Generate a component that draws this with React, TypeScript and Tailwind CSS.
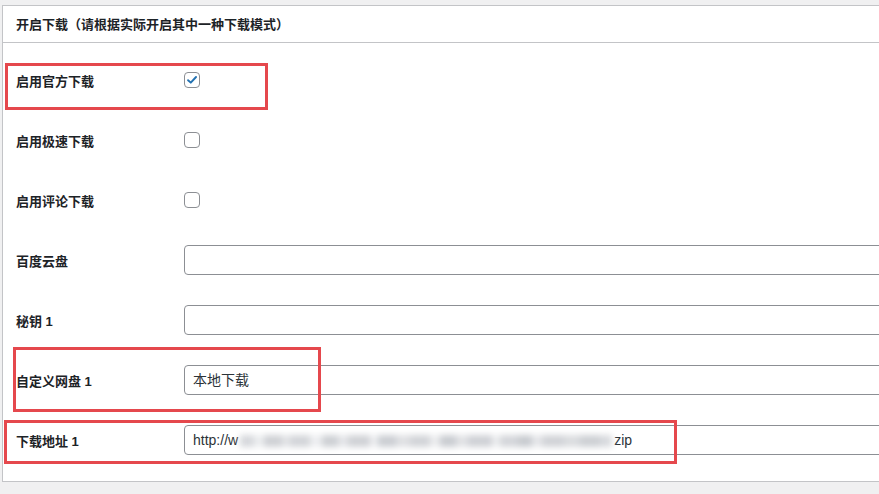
import React from 'react';

const FONT = { fontFamily: "'Liberation Sans', 'Noto Sans CJK SC', sans-serif" };

// mosaic blocks that hide part of the URL (widths in px, shades)
const MOSAIC: [number, string][] = [
  [14, '#d6d8dc'], [10, '#eceef0'], [18, '#cfd1d5'], [8, '#e3e4e7'], [20, '#d3d5d9'],
  [12, '#eeeff1'], [16, '#cdd0d4'], [10, '#e5e6e9'], [22, '#d0d2d6'], [8, '#eeeff1'],
  [18, '#cbced3'], [14, '#dfe0e3'], [20, '#d2d4d8'], [10, '#ecedef'], [16, '#c9ccd1'],
  [12, '#e1e2e5'], [24, '#cfd1d6'], [8, '#edeef0'], [18, '#d4d6da'], [14, '#c8cbd0'],
  [10, '#e6e7ea'], [22, '#d1d3d7'], [16, '#dadcdf'], [20, '#cdd0d4'], [12, '#d8dade'],
];

type Row =
  | { label: string; kind: 'check'; checked?: boolean }
  | { label: string; kind: 'input'; value?: React.ReactNode };

const ROWS: Row[] = [
  { label: '启用官方下载', kind: 'check', checked: true },
  { label: '启用极速下载', kind: 'check' },
  { label: '启用评论下载', kind: 'check' },
  { label: '百度云盘', kind: 'input' },
  { label: '秘钥 1', kind: 'input' },
  { label: '自定义网盘 1', kind: 'input', value: '本地下载' },
  {
    label: '下载地址 1',
    kind: 'input',
    value: (
      <>
        <span>http://w</span>
        <span className="flex items-center h-[12px] mt-[2px] mx-[2px] blur-[3px]" aria-hidden>
          {MOSAIC.map(([w, c], i) => (
            <span key={i} className="h-full" style={{ width: w, backgroundColor: c }} />
          ))}
        </span>
        <span>zip</span>
      </>
    ),
  },
];

const Checkbox = ({ checked }: { checked?: boolean }) => (
  <span className="w-4 h-4 rounded-[4px] border border-[#8c8f94] bg-white flex items-center justify-center">
    {checked && (
      <svg viewBox="0 0 16 16" className="w-[14px] h-[14px]">
        <path d="M3.5 8.2 L6.6 11 L12.6 4.6" fill="none" stroke="#2271b1" strokeWidth="2.2" strokeLinecap="round" strokeLinejoin="round" />
      </svg>
    )}
  </span>
);

export default function App() {
  return (
    <div className="relative w-[879px] h-[494px] overflow-hidden bg-[#f0f0f1] pt-[5px] pl-[2px]" style={FONT}>
      <div className="w-[1000px] bg-white border-l border-t border-b border-[#c3c4c7]">
        <div className="h-[37px] border-b border-[#c3c4c7] flex items-center pl-[13px] pt-[1px]">
          <span className="text-[13px] font-bold text-[#1d2327]">开启下载（请根据实际开启其中一种下载模式）</span>
        </div>
        <div className="pt-[7px] pb-[11px]">
          {ROWS.map((r, i) => (
            <div key={i} className="h-[60px] flex items-center">
              <div className="w-[181px] pl-[13px] pt-[3px] text-[13px] font-bold text-[#1d2327]">{r.label}</div>
              {r.kind === 'check' ? (
                <Checkbox checked={r.checked} />
              ) : (
                <div className="w-[800px] h-[30px] rounded-[4px] border border-[#8c8f94] bg-white flex items-center pl-2 text-[14px] text-[#2c3338] whitespace-nowrap overflow-hidden">
                  {r.value}
                </div>
              )}
            </div>
          ))}
        </div>
      </div>

      {/* annotation boxes */}
      <div className="absolute left-[5px] top-[63px] w-[263px] h-[47px] border-[3px] border-[#e5484d]" />
      <div className="absolute left-[13px] top-[347px] w-[308px] h-[65px] border-[3px] border-[#e5484d]" />
      <div className="absolute left-[4px] top-[420px] w-[673px] h-[44px] border-[3px] border-[#e5484d]" />
    </div>
  );
}
